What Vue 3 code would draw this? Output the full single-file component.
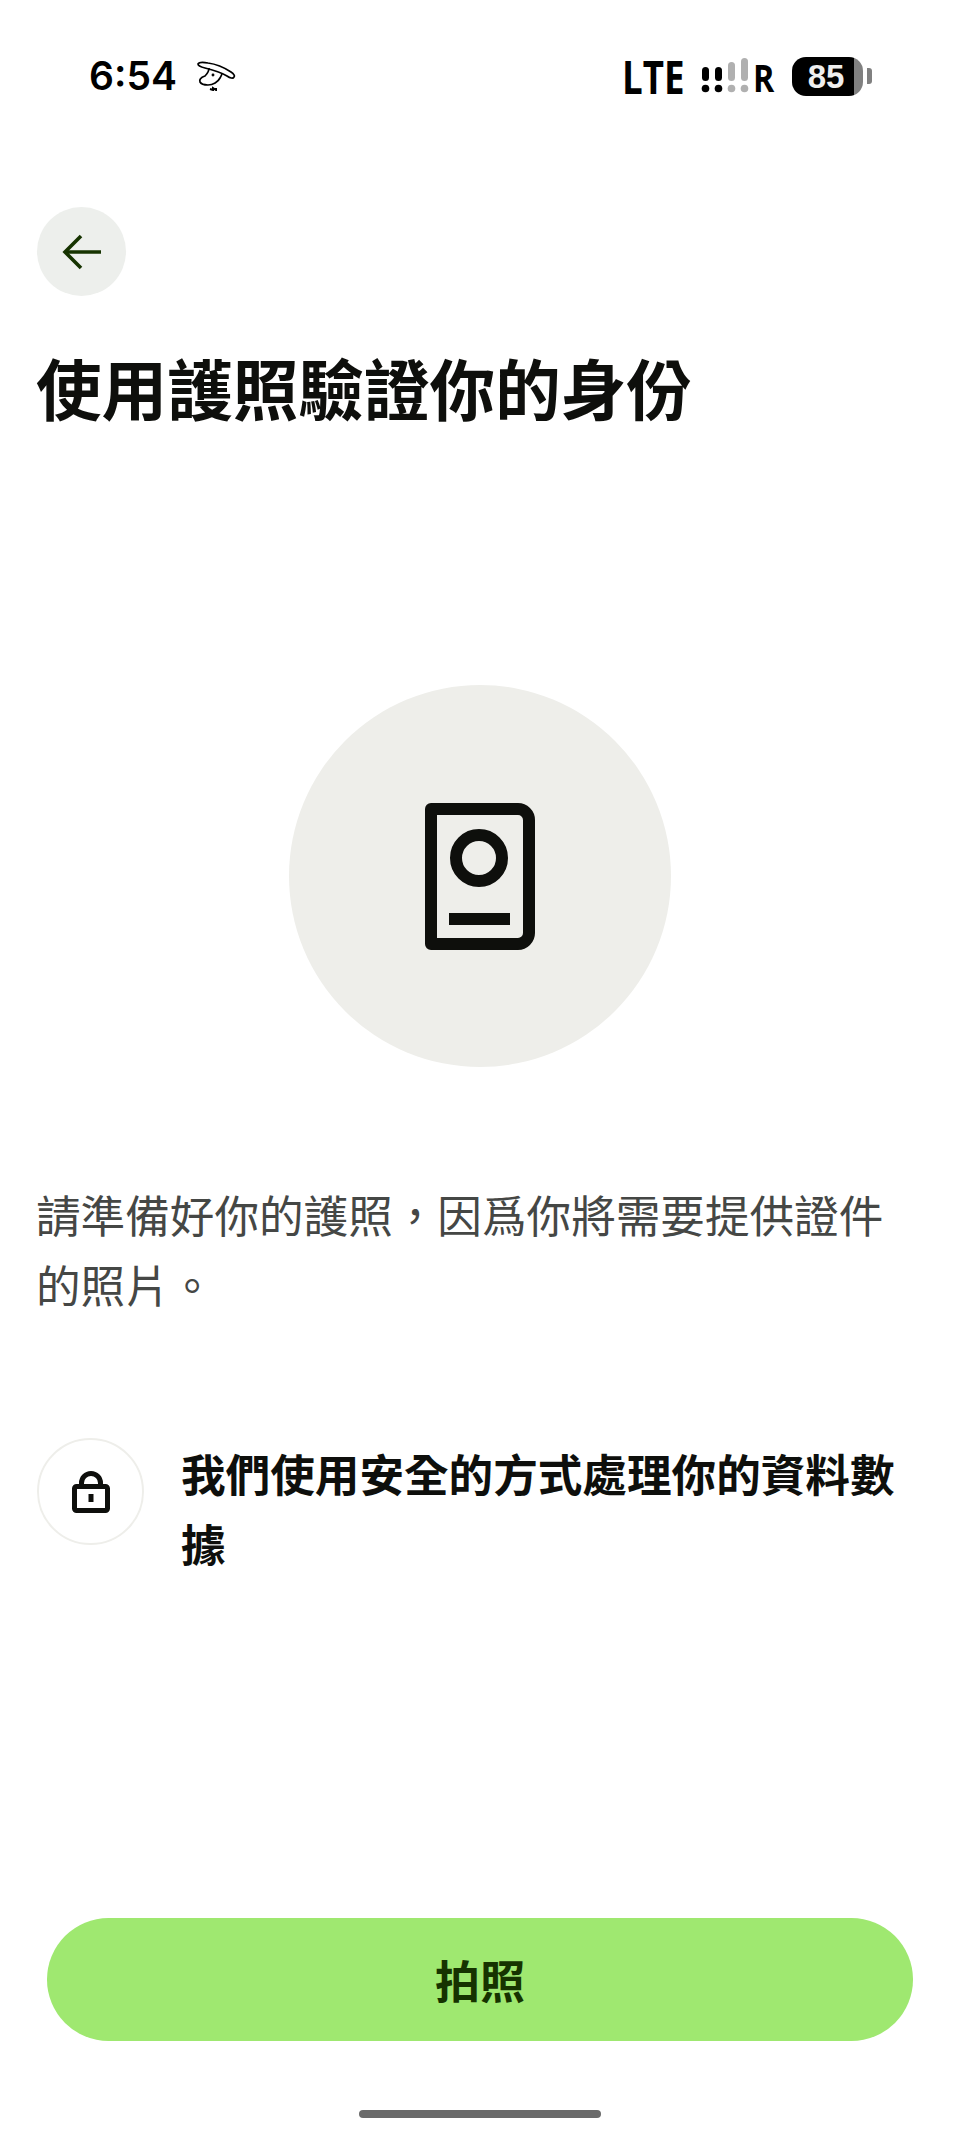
<script setup>
const title = '使用護照驗證你的身份'
const intro = '請準備好你的護照\uFF0C因爲你將需要提供證件的照片\u3002'
const secure = '我們使用安全的方式處理你的資料數據'
</script>

<template>
  <div class="page">
    <div class="status">
      <div class="status-left">
        <span class="time">6:54</span>
        <svg class="bird" viewBox="0 0 40 30" width="40" height="30" fill="none" stroke="#000" stroke-width="1.7">
          <path d="M2 3c1-2 5-2 10-1 8 1 17 5 23 9 3 2 4 4 3 5-1 2-4 1-7-1-6-4-14-6-22-8C5 6 2 5 2 3z" />
          <path d="M13 7c0 3-1 5-4 8-3 1-6 3-5 6 1 2 4 3 8 3 5 0 10-3 12-7 1-2 2-3 2-5" />
          <path d="M14 28l3 1v-2l3 2v-2" stroke-width="2" />
          <circle cx="17" cy="14" r="0.6" />
        </svg>
      </div>
      <div class="status-right">
        <span class="lte">LTE</span>
        <svg class="signal" viewBox="0 0 46 36" width="46" height="36">
          <g fill="#000">
            <rect x="0" y="9" width="7" height="14" rx="3.5" />
            <circle cx="3.5" cy="30.5" r="3.8" />
            <rect x="13" y="9" width="7" height="14" rx="3.5" />
            <circle cx="16.5" cy="30.5" r="3.8" />
          </g>
          <g fill="#b0b0b0">
            <rect x="26" y="4" width="7" height="19" rx="3.5" />
            <circle cx="29.5" cy="30.5" r="3.8" />
            <rect x="39" y="0" width="7" height="23" rx="3.5" />
            <circle cx="42.5" cy="30.5" r="3.8" />
          </g>
        </svg>
        <span class="roam">R</span>
        <div class="battery">
          <div class="battery-body"><span>85</span></div>
          <div class="battery-cap"></div>
        </div>
      </div>
    </div>

    <div class="content">
      <div class="back">
        <svg viewBox="0 0 40 36" width="40" height="36" fill="none" stroke="#163300" stroke-width="3.6">
          <path d="M39 18H3" />
          <path d="M19 2L3 18l16 16" />
        </svg>
      </div>
      <h1 class="title">{{ title }}</h1>

      <div class="hero">
        <svg viewBox="0 0 110 147" width="110" height="147" fill="none" stroke="#0e0f0c" stroke-width="12">
          <path d="M6 6h87c6 0 11 5 11 11v113c0 6-5 11-11 11H6z" stroke-linejoin="round" />
          <circle cx="54" cy="55" r="23" />
          <path d="M24 116h61" />
        </svg>
      </div>

      <p class="intro">{{ intro }}</p>

      <div class="secure">
        <div class="lock">
          <svg viewBox="0 0 38 42" width="38" height="42" fill="none" stroke="#0e0f0c" stroke-width="5">
            <rect x="2.5" y="15.5" width="33" height="24" rx="2" />
            <path d="M9.5 15V12a9.5 9.5 0 0 1 19 0v3" />
            <path d="M19 23v8" />
          </svg>
        </div>
        <p class="secure-text">{{ secure }}</p>
      </div>
    </div>

    <div class="footer">
      <button class="cta">拍照</button>
      <div class="home"></div>
    </div>
  </div>
</template>

<style>
body {
  margin: 0;
  background: #fff;
}
</style>

<style scoped>
.page {
  width: 960px;
  height: 2142px;
  display: flex;
  flex-direction: column;
  background: #fff;
  color: #0e0f0c;
  font-family: "Noto Sans CJK TC", "Noto Sans", sans-serif;
}
.status {
  height: 207px;
  box-sizing: border-box;
  padding: 52px 88px 0 89px;
  display: flex;
  justify-content: space-between;
  align-items: flex-start;
}
.status-left {
  display: flex;
  align-items: center;
  gap: 19px;
}
.time {
  font-family: Inter, sans-serif;
  font-size: 39px;
  font-weight: 600;
  line-height: 48px;
  color: #000;
}
.status-right {
  display: flex;
  align-items: center;
  height: 48px;
}
.lte {
  font-family: "Open Sans", sans-serif;
  font-weight: 700;
  font-size: 47px;
  line-height: 48px;
  transform: scaleX(0.78);
  transform-origin: left center;
  color: #000;
  width: 80px;
}
.signal {
  overflow: visible;
}
.roam {
  font-family: "Open Sans", sans-serif;
  font-weight: 700;
  font-size: 38px;
  width: 17px;
  margin-left: 5px;
  transform: scaleX(0.85);
  transform-origin: left center;
  color: #000;
  line-height: 48px;
  padding-top: 2px;
}
.battery {
  display: flex;
  align-items: center;
  margin-left: 22px;
}
.battery-body {
  width: 71px;
  height: 39px;
  border-radius: 14px;
  background: linear-gradient(90deg, #000 0, #000 87%, #808080 87%);
  display: flex;
  align-items: center;
  justify-content: center;
  padding-right: 3px;
  box-sizing: border-box;
}
.battery-body span {
  font-family: "Liberation Sans", sans-serif;
  font-size: 33px;
  font-weight: 700;
  color: #eee;
  line-height: 39px;
}
.battery-cap {
  width: 5px;
  height: 16px;
  margin-left: 4px;
  border-radius: 0 3px 3px 0;
  background: #808080;
}
.content {
  flex: 1;
  padding: 0 36px;
}
.back {
  width: 89px;
  height: 89px;
  margin-left: 1px;
  border-radius: 50%;
  background: #edefec;
  display: flex;
  align-items: center;
  justify-content: center;
}
.title {
  margin: 48px 0 0;
  font-size: 65.6px;
  line-height: 86px;
  font-weight: 700;
  white-space: nowrap;
}
.hero {
  width: 382px;
  height: 382px;
  margin: 255px auto 0;
  border-radius: 50%;
  background: #eeeeea;
  display: flex;
  align-items: center;
  justify-content: center;
}
.intro {
  margin: 112px 0 0;
  width: 860px;
  font-size: 44.6px;
  line-height: 70px;
  color: #454745;
}
.secure {
  margin-top: 119px;
  display: flex;
  align-items: flex-start;
  gap: 37px;
}
.lock {
  width: 107px;
  height: 107px;
  margin-left: 1px;
  flex: none;
  box-sizing: border-box;
  border: 2px solid #eeeeea;
  border-radius: 50%;
  display: flex;
  align-items: center;
  justify-content: center;
}
.secure-text {
  margin: 0;
  width: 720px;
  font-size: 44.6px;
  line-height: 70px;
  font-weight: 700;
}
.footer {
  display: flex;
  flex-direction: column;
  align-items: center;
  padding-bottom: 24px;
}
.cta {
  width: 866px;
  height: 123px;
  border: none;
  border-radius: 62px;
  background: #9fe870;
  color: #163300;
  font-family: inherit;
  font-size: 45px;
  font-weight: 700;
}
.home {
  width: 242px;
  height: 8px;
  margin-top: 69px;
  border-radius: 4px;
  background: #6a6a6a;
}
</style>
